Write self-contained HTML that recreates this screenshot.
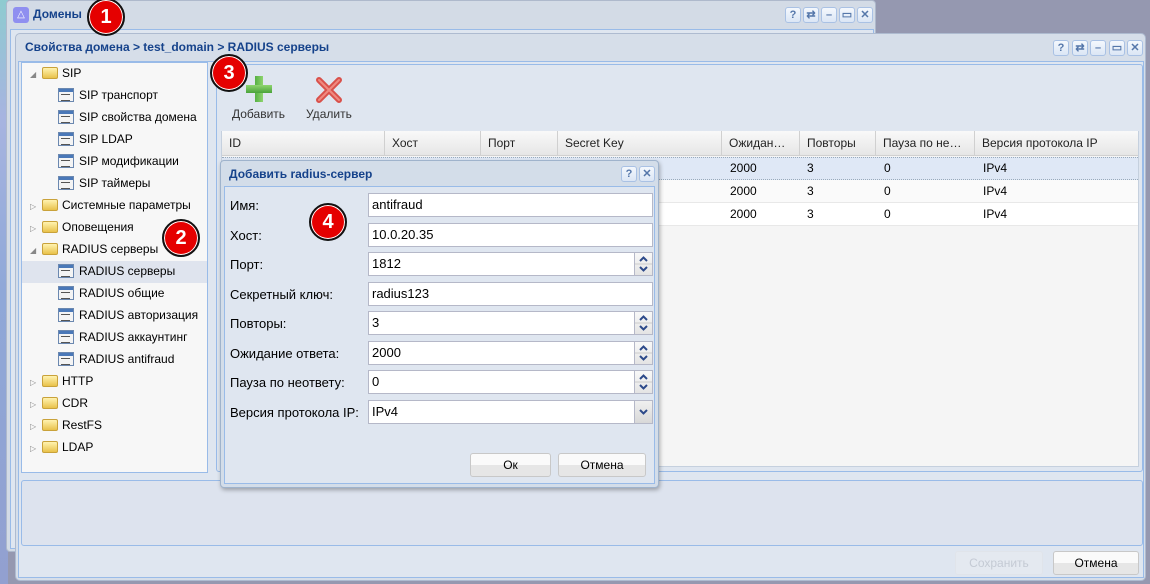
<!DOCTYPE html>
<html><head><meta charset="utf-8"><style>
*{box-sizing:border-box;margin:0;padding:0}
body{width:1150px;height:584px;overflow:hidden;position:relative;background:#9598b0;font-family:"Liberation Sans",sans-serif;font-size:12px;color:#000}
.a{position:absolute}
.tb{position:absolute;width:16px;height:16px;border:1px solid #a9c1e4;border-radius:3px;background:linear-gradient(#f4f8fd,#dbe6f5);color:#5577aa;font-size:11px;font-weight:bold;text-align:center;line-height:14px}
.badge{position:absolute;width:38px;height:38px;border-radius:50%;background:#e50000;border:2px solid #111;box-shadow:0 0 0 1px #fff inset;color:#fff;font-weight:bold;font-size:20px;text-align:center;line-height:34px}
.tree div{position:absolute;height:22px;line-height:20px;font-size:12px;white-space:nowrap}
.fold{display:inline-block;width:16px;height:12px;background:linear-gradient(#fff3b0,#e9c24a);border:1px solid #c9a23a;border-radius:2px;vertical-align:-2px;margin-right:4px}
.leaf{display:inline-block;width:16px;height:14px;background:#fff;border:1px solid #6b88b0;vertical-align:-3px;margin-right:5px;background:linear-gradient(#4a78b8 0 3px,#f4f4f4 3px);position:relative}
.leaf:after{content:"";position:absolute;left:2px;top:5px;width:9px;height:5px;border-top:1px solid #555;border-bottom:1px solid #555}
.arr{display:inline-block;width:12px;color:#888;font-size:8px}
.hd{position:absolute;top:131px;height:25px;line-height:25px;padding-left:7px;border-right:1px solid #d0d0d0;color:#222}
.cell{position:absolute;height:22px;line-height:22px;font-size:12px}
.lbl{position:absolute;left:230px;font-size:13px}
.fld{position:absolute;left:368px;width:285px;height:24px;background:#fff;border:1px solid #b5b8c8;padding-left:3px;line-height:22px;font-size:13px}
.spin{position:absolute;right:-1px;top:-1px;width:19px;height:24px;border:1px solid #b5b8c8;background:linear-gradient(#f8f8f8,#e4e4e4)}
.spin svg{display:block}
.btn{position:absolute;height:24px;border:1px solid #c8c8c8;border-radius:3px;background:linear-gradient(#fafafa 50%,#e6e6e6 50%);text-align:center;line-height:22px;font-size:12px}
</style></head><body>
<div class="a" style="left:0;top:0;width:8px;height:584px;background:linear-gradient(#8ecbd0,#a7b4e0 20%,#8fa8d8 50%,#92a0d0)"></div>
<div class="a" style="left:6px;top:0;width:870px;height:552px;background:#d3dbe6;border:1px solid #aeb9cc;border-radius:4px"></div>
<div class="a" style="left:13px;top:7px;width:16px;height:16px;background:#8f8ff0;border-radius:3px;color:#fff;font-size:10px;text-align:center;line-height:16px">△</div>
<div class="a" style="left:33px;top:7px;font-weight:bold;color:#15428b;font-size:12px">Домены</div>
<div class="tb" style="left:785px;top:7px">?</div><div class="tb" style="left:803px;top:7px">⇄</div><div class="tb" style="left:821px;top:7px">–</div><div class="tb" style="left:839px;top:7px">▭</div><div class="tb" style="left:857px;top:7px">✕</div>
<div class="a" style="left:10px;top:29px;width:864px;height:520px;border:1px solid #99bbe8;background:#dfe6f0"></div>
<div class="a" style="left:15px;top:33px;width:1131px;height:548px;background:#d6dee9;border:1px solid #aebbd0;border-radius:5px"></div>
<div class="a" style="left:25px;top:40px;font-weight:bold;color:#15428b;font-size:12px">Свойства домена &gt; test_domain &gt; RADIUS серверы</div>
<div class="tb" style="left:1053px;top:40px">?</div><div class="tb" style="left:1072px;top:40px">⇄</div><div class="tb" style="left:1090px;top:40px">–</div><div class="tb" style="left:1109px;top:40px">▭</div><div class="tb" style="left:1127px;top:40px">✕</div>
<div class="a" style="left:18px;top:61px;width:1126px;height:517px;background:#dfe6f0;border:1px solid #99bbe8"></div>
<div class="a tree" style="left:21px;top:62px;width:187px;height:411px;background:#f7f7f7;border:1px solid #99bbe8">
<div style="left:8px;top:0"><span class="arr">◢</span><span class="fold"></span>SIP</div>
<div style="left:36px;top:22px"><span class="leaf"></span>SIP транспорт</div>
<div style="left:36px;top:44px"><span class="leaf"></span>SIP свойства домена</div>
<div style="left:36px;top:66px"><span class="leaf"></span>SIP LDAP</div>
<div style="left:36px;top:88px"><span class="leaf"></span>SIP модификации</div>
<div style="left:36px;top:110px"><span class="leaf"></span>SIP таймеры</div>
<div style="left:8px;top:132px"><span class="arr">▷</span><span class="fold"></span>Системные параметры</div>
<div style="left:8px;top:154px"><span class="arr">▷</span><span class="fold"></span>Оповещения</div>
<div style="left:8px;top:176px"><span class="arr">◢</span><span class="fold"></span>RADIUS серверы</div>
<div style="left:0;top:198px;width:185px;background:#dfe4ee;padding-left:36px"><span class="leaf"></span>RADIUS серверы</div>
<div style="left:36px;top:220px"><span class="leaf"></span>RADIUS общие</div>
<div style="left:36px;top:242px"><span class="leaf"></span>RADIUS авторизация</div>
<div style="left:36px;top:264px"><span class="leaf"></span>RADIUS аккаунтинг</div>
<div style="left:36px;top:286px"><span class="leaf"></span>RADIUS antifraud</div>
<div style="left:8px;top:308px"><span class="arr">▷</span><span class="fold"></span>HTTP</div>
<div style="left:8px;top:330px"><span class="arr">▷</span><span class="fold"></span>CDR</div>
<div style="left:8px;top:352px"><span class="arr">▷</span><span class="fold"></span>RestFS</div>
<div style="left:8px;top:374px"><span class="arr">▷</span><span class="fold"></span>LDAP</div>
</div>
<div class="a" style="left:216px;top:64px;width:927px;height:408px;background:#dfe6f0;border:1px solid #99bbe8;border-radius:3px"></div>
<div class="a" style="left:246px;top:76px;width:26px;height:26px">
<div class="a" style="left:9px;top:0;width:8px;height:26px;background:linear-gradient(90deg,#56b043,#8ed46f)"></div>
<div class="a" style="left:0;top:9px;width:26px;height:8px;background:linear-gradient(#8ed46f,#4aa33a)"></div></div>
<svg class="a" style="left:315px;top:76px" width="28" height="28"><path d="M4 4L24 24M24 4L4 24" stroke="#d9504a" stroke-width="6" stroke-linecap="round"/><path d="M4 4L24 24M24 4L4 24" stroke="#f08a80" stroke-width="2" stroke-linecap="round"/></svg>
<div class="a" style="left:232px;top:107px;color:#333">Добавить</div>
<div class="a" style="left:306px;top:107px;color:#333">Удалить</div>
<div class="a" style="left:221px;top:131px;width:918px;height:336px;background:#f5f5f5;border:1px solid #c5d0de"></div>
<div class="a" style="left:222px;top:131px;width:916px;height:25px;background:linear-gradient(#f9f9f9,#e6e6e6);border-bottom:1px solid #d0d0d0"></div>
<div class="hd" style="left:222px;width:163px">ID</div>
<div class="hd" style="left:385px;width:96px">Хост</div>
<div class="hd" style="left:481px;width:77px">Порт</div>
<div class="hd" style="left:558px;width:164px">Secret Key</div>
<div class="hd" style="left:722px;width:78px">Ожидан…</div>
<div class="hd" style="left:800px;width:76px">Повторы</div>
<div class="hd" style="left:876px;width:99px">Пауза по не…</div>
<div class="hd" style="left:975px;width:163px;border-right:none">Версия протокола IP</div>
<div class="a" style="left:222px;top:157px;width:916px;height:23px;background:#dfe8f6;border-top:1px dotted #9ab;border-bottom:1px dotted #9ab"></div>
<div class="a" style="left:222px;top:180px;width:916px;height:23px;background:#fafafa;border-bottom:1px solid #e8e8e8"></div>
<div class="a" style="left:222px;top:203px;width:916px;height:23px;background:#fff;border-bottom:1px solid #e8e8e8"></div>
<div class="cell" style="left:730px;top:157px">2000</div><div class="cell" style="left:807px;top:157px">3</div><div class="cell" style="left:884px;top:157px">0</div><div class="cell" style="left:983px;top:157px">IPv4</div>
<div class="cell" style="left:730px;top:180px">2000</div><div class="cell" style="left:807px;top:180px">3</div><div class="cell" style="left:884px;top:180px">0</div><div class="cell" style="left:983px;top:180px">IPv4</div>
<div class="cell" style="left:730px;top:203px">2000</div><div class="cell" style="left:807px;top:203px">3</div><div class="cell" style="left:884px;top:203px">0</div><div class="cell" style="left:983px;top:203px">IPv4</div>
<div class="a" style="left:21px;top:480px;width:1122px;height:66px;border:1px solid #99bbe8;border-radius:3px;background:#dde3ee"></div>
<div class="btn" style="left:955px;top:551px;width:88px;color:#c4cad4;border-color:#e0e4ea;background:#e4e9f0">Сохранить</div>
<div class="btn" style="left:1053px;top:551px;width:86px">Отмена</div>
<div class="a" style="left:220px;top:160px;width:439px;height:328px;background:#d3dde9;border:1px solid #9fb3cc;border-radius:4px;box-shadow:1px 2px 4px rgba(0,0,0,.3)"></div>
<div class="a" style="left:229px;top:167px;font-weight:bold;color:#15428b;font-size:12px">Добавить radius-сервер</div>
<div class="tb" style="left:621px;top:166px">?</div><div class="tb" style="left:639px;top:166px">✕</div>
<div class="a" style="left:224px;top:186px;width:431px;height:298px;background:#dfe6f0;border:1px solid #99bbe8"></div>
<div class="lbl" style="top:198px">Имя:</div><div class="fld" style="top:193px">antifraud</div>
<div class="lbl" style="top:228px">Хост:</div><div class="fld" style="top:223px">10.0.20.35</div>
<div class="lbl" style="top:257px">Порт:</div><div class="fld" style="top:252px">1812<div class="spin"><svg width="17" height="22"><path d="M5 8L8.5 4.5L12 8M5 14L8.5 17.5L12 14" fill="none" stroke="#2d4a8a" stroke-width="2"/><path d="M0 11H17" stroke="#ccc"/></svg></div></div>
<div class="lbl" style="top:287px">Секретный ключ:</div><div class="fld" style="top:282px">radius123</div>
<div class="lbl" style="top:316px">Повторы:</div><div class="fld" style="top:311px">3<div class="spin"><svg width="17" height="22"><path d="M5 8L8.5 4.5L12 8M5 14L8.5 17.5L12 14" fill="none" stroke="#2d4a8a" stroke-width="2"/><path d="M0 11H17" stroke="#ccc"/></svg></div></div>
<div class="lbl" style="top:346px">Ожидание ответа:</div><div class="fld" style="top:341px">2000<div class="spin"><svg width="17" height="22"><path d="M5 8L8.5 4.5L12 8M5 14L8.5 17.5L12 14" fill="none" stroke="#2d4a8a" stroke-width="2"/><path d="M0 11H17" stroke="#ccc"/></svg></div></div>
<div class="lbl" style="top:375px">Пауза по неответу:</div><div class="fld" style="top:370px">0<div class="spin"><svg width="17" height="22"><path d="M5 8L8.5 4.5L12 8M5 14L8.5 17.5L12 14" fill="none" stroke="#2d4a8a" stroke-width="2"/><path d="M0 11H17" stroke="#ccc"/></svg></div></div>
<div class="lbl" style="top:405px">Версия протокола IP:</div><div class="fld" style="top:400px">IPv4<div class="spin" style="background:linear-gradient(#f0f0f0,#d8d8d8)"><svg width="17" height="22"><path d="M5 9L8.5 12.5L12 9" fill="none" stroke="#2d4a8a" stroke-width="2"/></svg></div></div>
<div class="btn" style="left:470px;top:453px;width:81px">Ок</div>
<div class="btn" style="left:558px;top:453px;width:88px">Отмена</div>
<div class="badge" style="left:87px;top:-2px">1</div>
<div class="badge" style="left:210px;top:54px">3</div>
<div class="badge" style="left:162px;top:219px">2</div>
<div class="badge" style="left:309px;top:203px">4</div>
</body></html>
